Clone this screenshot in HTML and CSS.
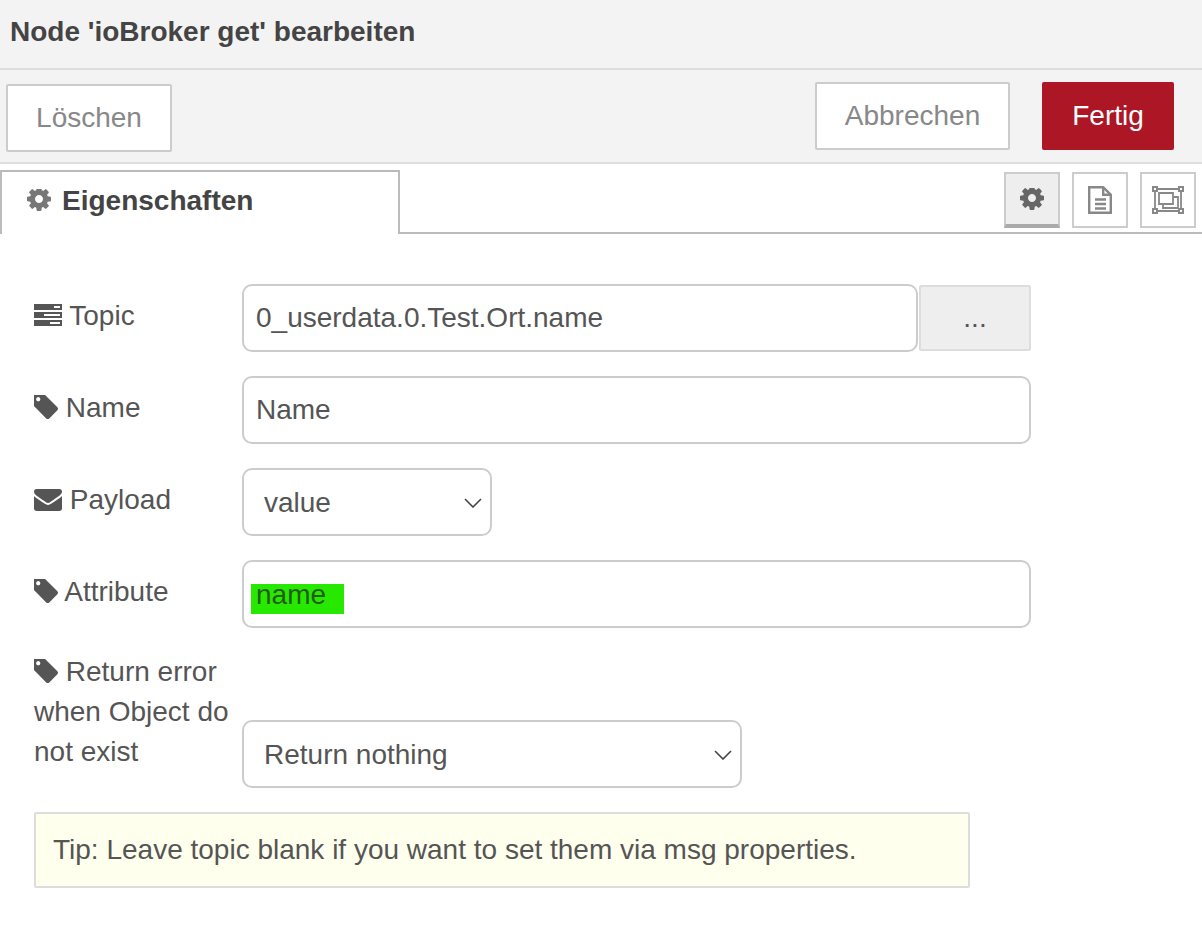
FILE: index.html
```html
<!DOCTYPE html>
<html lang="de">
<head>
    <meta charset="UTF-8">
    <title>Node 'ioBroker get' bearbeiten</title>
    <link rel="stylesheet" href="styles.css">
</head>
<body>
    <svg class="icon-defs" width="0" height="0">
        <symbol id="cog" viewBox="0 0 1536 1536">
            <path d="M1024 640q0-106-75-181t-181-75-181 75-75 181 75 181 181 75 181-75 75-181zm512-109v222q0 12-8 23t-20 13l-185 28q-19 54-39 91 35 50 107 138 10 12 10 25t-9 23q-27 37-99 108t-94 71q-12 0-26-9l-138-108q-44 23-91 38-16 136-29 186-7 28-36 28h-222q-14 0-24.500-8.500t-11.500-21.500l-28-184q-49-16-90-37l-141 107q-10 9-25 9-14 0-25-11-126-114-165-168-7-10-7-23 0-12 8-23 15-21 51-66.500t54-70.500q-27-50-41-99l-183-27q-13-2-21-12.500t-8-23.500v-222q0-12 8-23t19-13l186-28q14-46 39-92-40-57-107-138-10-12-10-24 0-10 9-23 26-36 98.500-107.500t94.500-71.500q13 0 26 10l138 107q44-23 91-38 16-136 29-186 7-28 36-28h222q14 0 24.500 8.500t11.500 21.500l28 184q49 16 90 37l142-107q9-9 24-9 13 0 25 10 129 119 165 170 7 8 7 22 0 12-8 23-15 21-51 66.500t-54 70.500q26 50 41 98l183 28q13 2 21 12.500t8 23.500z"/>
        </symbol>
        <symbol id="tag" viewBox="0 192 1451 1451">
            <path d="M384 448q0-53-37.500-90.500t-90.500-37.500-90.500 37.500-37.500 90.500 37.500 90.500 90.500 37.500 90.500-37.500 37.500-90.500zm1067 576q0 53-37 90l-491 492q-39 37-91 37-53 0-90-37l-715-716q-38-37-64.500-101t-26.500-117v-416q0-52 38-90t90-38h416q53 0 117 26.500t102 64.500l715 714q37 39 37 91z"/>
        </symbol>
    </svg>

    <div class="title">Node 'ioBroker get' bearbeiten</div>

    <div class="toolbar">
        <button class="btn btn-delete" type="button">Löschen</button>
        <div class="toolbar-right">
            <button class="btn btn-cancel" type="button">Abbrechen</button>
            <button class="btn btn-done" type="button">Fertig</button>
        </div>
    </div>

    <div class="tabs">
        <div class="tab">
            <svg class="tab-cog"><use href="#cog"/></svg>
            <span>Eigenschaften</span>
        </div>
        <div class="tab-links">
            <a class="tab-link selected"><svg class="link-cog"><use href="#cog"/></svg></a>
            <a class="tab-link">
                <svg class="link-icon" viewBox="0 0 24 28">
                    <path class="line" d="M1.200 1.200h14l7.600 7.600v18H1.200z"/>
                    <path class="line" d="M15.200 1.200v7.600h7.600M7 13.500h11M7 18h11M7 22.500h11"/>
                </svg>
            </a>
            <a class="tab-link">
                <svg class="link-icon wide" viewBox="0 0 32 28">
                    <path class="line thin" d="M3 3h26v22H3z"/>
                    <path class="line thin" d="M7 7h14v11H7zM21 11h5v11H11v-4"/>
                    <path class="corner" d="M1 1h4v4H1zM27 1h4v4h-4zM1 23h4v4H1zM27 23h4v4h-4z"/>
                </svg>
            </a>
        </div>
    </div>

    <form class="form">
        <div class="row">
            <label class="label">
                <svg class="icon-tasks" viewBox="0 0 28 22">
                    <path d="M0 0h28v6H0zM0 8h28v6H0zM0 16h28v6H0z"/>
                    <path class="slot" d="M20 2h6v2h-6zM10 10h16v2H10zM16 18h10v2H16z"/>
                </svg> Topic
            </label>
            <input class="field topic-input" type="text" value="0_userdata.0.Test.Ort.name">
            <button class="browse" type="button">...</button>
        </div>
        <div class="row">
            <label class="label"><svg class="icon-tag"><use href="#tag"/></svg> Name</label>
            <input class="field wide-field" type="text" value="Name">
        </div>
        <div class="row">
            <label class="label">
                <svg class="icon-mail" viewBox="0 256 1792 1408">
                    <path d="M1792 710v794q0 66-47 113t-113 47h-1472q-66 0-113-47t-47-113v-794q44 49 101 87 362 246 497 345 57 42 92.500 65.500t94.500 48 110 24.500h2q51 0 110-24.500t94.500-48 92.500-65.500q170-123 498-345 57-39 100-87zm0-294q0 79-49 151t-122 123q-376 261-468 325-10 7-42.500 30.500t-54 38-52 32.500-57.500 27-50 9h-2q-23 0-50-9t-57.500-27-52-32.500-54-38-42.500-30.500q-91-64-262-182.500t-205-142.500q-62-42-117-115.500t-55-136.500q0-78 41.500-130t118.500-52h1472q65 0 112.500 47t47.500 113z"/>
                </svg> Payload
            </label>
            <div class="field select select-small">
                <span>value</span>
                <svg class="chevron" viewBox="0 0 18 10"><path d="M1 1l8 8 8-8"/></svg>
            </div>
        </div>
        <div class="row">
            <label class="label"><svg class="icon-tag"><use href="#tag"/></svg> Attribute</label>
            <div class="field wide-field attribute"><span class="marked">name</span></div>
        </div>
        <div class="row row-tall">
            <label class="label label-top"><svg class="icon-tag"><use href="#tag"/></svg> Return error when Object do not exist</label>
            <div class="field select select-large">
                <span>Return nothing</span>
                <svg class="chevron" viewBox="0 0 18 10"><path d="M1 1l8 8 8-8"/></svg>
            </div>
        </div>
        <div class="tip">Tip: Leave topic blank if you want to set them via msg properties.</div>
    </form>
</body>
</html>
```

FILE: styles.css
```css
* {
    box-sizing: border-box;
}
body {
    margin: 0;
    background-color: white;
    color: #555;
    font-family: "Liberation Sans", Arial, sans-serif;
    font-size: 28px;
    overflow: hidden;
}
.icon-defs {
    display: block;
}
.title {
    height: 70px;
    padding: 0 0 4px 10px;
    display: flex;
    align-items: center;
    background-color: #f3f3f3;
    border-bottom: 2px solid #ddd;
    color: #444;
    font-size: 28px;
    font-weight: bold;
}
.toolbar {
    height: 94px;
    padding: 12px 28px 0 6px;
    display: flex;
    justify-content: space-between;
    align-items: flex-start;
    background-color: #f3f3f3;
    border-bottom: 2px solid #ddd;
}
.toolbar-right {
    display: flex;
    gap: 32px;
}
.btn {
    height: 68px;
    border: 2px solid #ccc;
    border-radius: 2px;
    background-color: white;
    color: #888;
    font-family: inherit;
    font-size: 28px;
}
.btn-delete {
    width: 166px;
    margin-top: 2px;
}
.btn-cancel {
    width: 195px;
}
.btn-done {
    width: 132px;
    border: none;
    border-radius: 2px;
    background-color: #ad1625;
    color: white;
}
.tabs {
    height: 70px;
    padding: 6px 6px 0 0;
    display: flex;
    justify-content: space-between;
    align-items: flex-start;
    border-bottom: 2px solid #bbb;
}
.tab {
    width: 400px;
    height: 64px;
    padding: 0 0 4px 25px;
    display: flex;
    align-items: center;
    gap: 11px;
    border: 2px solid #bbb;
    border-bottom: none;
    background-color: white;
    color: #444;
    font-weight: bold;
}
.tab-cog {
    width: 24px;
    height: 24px;
    fill: #777;
}
.tab-links {
    margin-top: 2px;
    display: flex;
    gap: 12px;
}
.tab-link {
    width: 56px;
    height: 56px;
    display: flex;
    align-items: center;
    justify-content: center;
    border: 2px solid #ccc;
}
.tab-link.selected {
    padding-top: 2px;
    background-color: #eee;
    border-bottom: 4px solid #aaa;
}
.link-cog {
    width: 24px;
    height: 24px;
    fill: #666;
}
.link-icon {
    width: 24px;
    height: 28px;
    fill: none;
}
.link-icon.wide {
    width: 32px;
}
.line {
    fill: none;
    stroke: #888;
    stroke-width: 2.4;
}
.line.thin {
    stroke-width: 1.8;
}
.corner {
    fill: white;
    stroke: #888;
    stroke-width: 2;
}
.form {
    padding: 50px 0 0 34px;
}
.row {
    height: 68px;
    margin-bottom: 24px;
    display: flex;
    align-items: flex-start;
}
.row-tall {
    height: 136px;
    align-items: flex-end;
}
.label {
    width: 208px;
    margin-top: 12px;
    line-height: 40px;
    flex-shrink: 0;
}
.label-top {
    align-self: flex-start;
    margin-top: 0;
}
.label svg {
    fill: #555;
}
.slot {
    fill: white;
}
.icon-tasks {
    width: 28px;
    height: 22px;
    vertical-align: -1px;
}
.icon-tag {
    width: 24px;
    height: 24px;
    vertical-align: -2px;
}
.icon-mail {
    width: 28px;
    height: 22px;
    vertical-align: -2px;
}
.field {
    height: 68px;
    padding: 0 12px;
    border: 2px solid #ccc;
    border-radius: 10px;
    background-color: white;
    color: #555;
    font-family: inherit;
    font-size: 28px;
}
.topic-input {
    width: 676px;
}
.wide-field {
    width: 789px;
}
.browse {
    width: 112px;
    height: 66px;
    margin: 1px 0 0 1px;
    border: 2px solid #ddd;
    border-radius: 2px;
    background-color: #eee;
    color: #555;
    font-family: inherit;
    font-size: 28px;
}
.select {
    padding: 2px 8px 0 20px;
    display: flex;
    justify-content: space-between;
    align-items: center;
}
.select-small {
    width: 250px;
}
.select-large {
    width: 500px;
}
.chevron {
    width: 18px;
    height: 10px;
    fill: none;
    stroke: #444;
    stroke-width: 1.6;
}
.attribute {
    padding: 22px 0 0 7px;
}
.marked {
    display: block;
    width: 93px;
    height: 30px;
    padding-left: 5px;
    background-color: #27e900;
    color: #245c14;
    line-height: 22px;
}
.tip {
    width: 936px;
    height: 76px;
    padding-left: 17px;
    display: flex;
    align-items: center;
    border: 2px solid #ddd;
    border-radius: 2px;
    background-color: #ffffee;
}
```
